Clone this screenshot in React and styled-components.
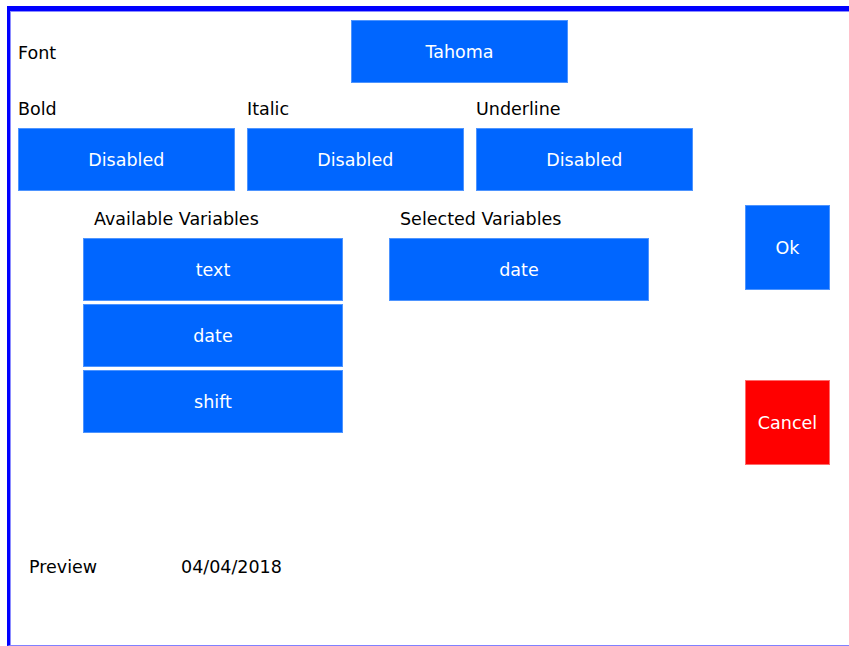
import React from 'react';
import styled, { createGlobalStyle } from 'styled-components';

const GlobalStyle = createGlobalStyle`
  html, body {
    margin: 0;
    padding: 0;
    background: #ffffff;
  }
  body {
    font-family: "DejaVu Sans", Tahoma, sans-serif;
    font-size: 17.5px;
    color: #000000;
  }
`;

const Frame = styled.div`
  box-sizing: border-box;
  margin: 6px 0 0 7px;
  width: 842px;
  height: 640px;
  border-top: 5px solid #0000ff;
  border-left: 3px solid #0000ff;
  border-bottom: 1px solid #8080ff;
  box-shadow: inset 1px 1px 0 #8c8cff;
  padding: 9px 0 0 8px;
`;

const Row = styled.div`
  display: flex;
  align-items: ${p => p.$align || 'flex-start'};
  margin-top: ${p => p.$top || 0}px;
  margin-left: ${p => p.$left || 0}px;
  gap: ${p => p.$gap || 0}px;
`;

const Label = styled.div`
  line-height: 20px;
  height: 20px;
  white-space: nowrap;
  width: ${p => (p.$width ? `${p.$width}px` : 'auto')};
  padding-left: ${p => p.$indent || 0}px;
  padding-top: ${p => p.$nudge || 0}px;
`;

const Tile = styled.div`
  box-sizing: border-box;
  display: flex;
  align-items: center;
  justify-content: center;
  width: ${p => p.$w}px;
  height: ${p => p.$h}px;
  background: ${p => (p.$danger ? '#ff0000' : '#0066ff')};
  border: 1px solid ${p => (p.$danger ? '#ff6b6b' : '#4d94ff')};
  color: #ffffff;
  cursor: pointer;
  user-select: none;
`;

const Field = styled.div`
  display: flex;
  flex-direction: column;
  gap: 9px;
`;

const VarColumn = styled.div`
  display: flex;
  flex-direction: column;
  width: 260px;
  padding-top: 4px;
  margin-left: ${p => p.$left || 0}px;
`;

const VarList = styled.div`
  display: flex;
  flex-direction: column;
  gap: 3px;
  margin-top: 9px;
`;

const SideButtons = styled.div`
  display: flex;
  flex-direction: column;
  gap: 90px;
  margin-left: 96px;
`;

const styles = ['Bold', 'Italic', 'Underline'];
const available = ['text', 'date', 'shift'];
const selected = ['date'];

export default function App() {
  return (
    <>
      <GlobalStyle />
      <Frame>
        <Row $align="center">
          <Label $width={333} $nudge={2}>Font</Label>
          <Tile $w={217} $h={63}>Tahoma</Tile>
        </Row>

        <Row $top={16} $gap={12.5}>
          {styles.map(name => (
            <Field key={name}>
              <Label>{name}</Label>
              <Tile $w={216.5} $h={63}>Disabled</Tile>
            </Field>
          ))}
        </Row>

        <Row $top={14} $left={65}>
          <VarColumn>
            <Label $indent={11}>Available Variables</Label>
            <VarList>
              {available.map(v => (
                <Tile key={v} $w={260} $h={63}>{v}</Tile>
              ))}
            </VarList>
          </VarColumn>
          <VarColumn $left={46}>
            <Label $indent={11}>Selected Variables</Label>
            <VarList>
              {selected.map(v => (
                <Tile key={v} $w={260} $h={63}>{v}</Tile>
              ))}
            </VarList>
          </VarColumn>
          <SideButtons>
            <Tile $w={85} $h={85}>Ok</Tile>
            <Tile $w={85} $h={85} $danger>Cancel</Tile>
          </SideButtons>
        </Row>

        <Row $top={92} $left={11}>
          <Label $width={152}>Preview</Label>
          <Label>04/04/2018</Label>
        </Row>
      </Frame>
    </>
  );
}
